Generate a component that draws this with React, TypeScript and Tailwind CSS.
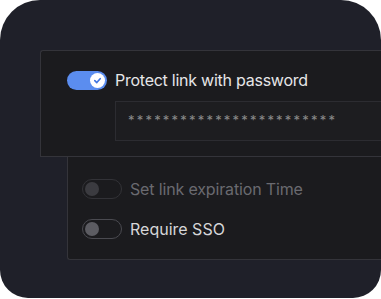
const Stars = () => <span>{"*".repeat(24)}</span>;

const OffToggle = ({ dim }: { dim?: boolean }) => (
  <span
    className={
      "flex items-center w-[40px] h-[20px] rounded-full border border-[#4a4a50] px-[2px] " +
      (dim ? "opacity-50" : "")
    }
  >
    <span className="w-[14px] h-[14px] rounded-full bg-[#5c5c62]" />
  </span>
);

export default function App() {
  return (
    <div className="w-[381px] h-[299px] bg-white">
      <div
        className="w-[381px] h-[298px] bg-[#1f2029] rounded-t-[40px] rounded-b-[28px] overflow-hidden pt-[50px] pl-[40px]"
        style={{ fontFamily: "Inter, 'Noto Sans', sans-serif" }}
      >
        {/* password panel */}
        <div className="bg-[#1b1b1e] border border-r-0 border-[#34343a] rounded-tl-[3px] pl-[26px] pt-[19px] pb-[15px]">
          <div className="flex items-center gap-[8px] h-[20px]">
            <span className="flex items-center justify-end w-[40px] h-[19px] rounded-full bg-[#5b8def] pr-[2px]">
              <span className="flex items-center justify-center w-[15px] h-[15px] rounded-full bg-white">
                <svg width="9" height="9" viewBox="0 0 10 10" fill="none">
                  <path d="M2 5.2 L4.2 7.3 L8 3" stroke="#3f74e0" strokeWidth="1.8" strokeLinecap="round" strokeLinejoin="round" />
                </svg>
              </span>
            </span>
            <span className="text-[16px] text-[#e6e6e8] tracking-[-0.25px]">Protect link with password</span>
          </div>
          <div className="ml-[48px] mt-[11px] h-[40px] border border-r-0 border-[#2c2c31] bg-[#1d1d20] flex items-center pl-[12px] text-[13px] text-[#8a8a8a] tracking-[2.2px]">
            <Stars />
          </div>
        </div>

        {/* other options */}
        <div className="ml-[27px] bg-[#1b1b1e] border border-t-0 border-r-0 border-[#34343a] rounded-bl-[3px] pl-[14px] pt-[22px] pb-[20px] flex flex-col gap-[20px]">
          <div className="flex items-center gap-[8px] h-[20px]">
            <OffToggle dim />
            <span className="text-[16px] text-[#6a6a70] tracking-[-0.15px]">Set link expiration Time</span>
          </div>
          <div className="flex items-center gap-[8px] h-[20px]">
            <OffToggle />
            <span className="text-[16px] text-[#d6d6d8]">Require SSO</span>
          </div>
        </div>
      </div>
    </div>
  );
}
